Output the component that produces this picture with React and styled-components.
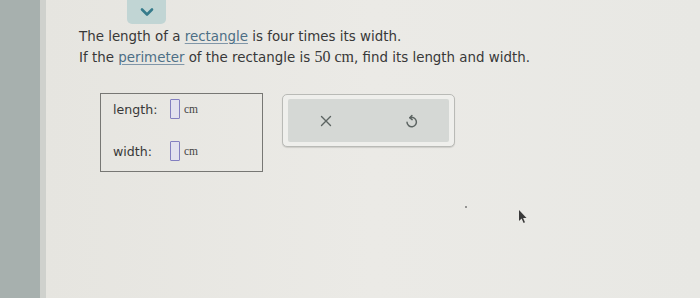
import React from "react";
import styled, { createGlobalStyle } from "styled-components";

const GlobalStyle = createGlobalStyle`
  html, body {
    margin: 0;
    padding: 0;
    background: #e9e8e4;
  }
  #root {
    height: 298px;
  }
`;

const Page = styled.div`
  display: flex;
  height: 298px;
  overflow: hidden;
  font-family: "DejaVu Sans", Verdana, sans-serif;
  color: #383838;
  position: relative;
`;

const SideBar = styled.div`
  width: 40px;
  flex-shrink: 0;
  background: #a7b0ae;
  border-right: 6px solid #cfd1cd;
`;

const Main = styled.div`
  flex: 1;
  display: flex;
  flex-direction: column;
  padding-left: 33px;
  background: linear-gradient(90deg, #e6e5e0 0%, #ebeae6 50%, #e8e8e4 100%);
`;

const Tab = styled.div`
  width: 39px;
  height: 24px;
  margin-left: 48px;
  background: #c1d5d4;
  border-radius: 0 0 5px 5px;
  display: flex;
  align-items: center;
  justify-content: center;
`;

const Question = styled.div`
  margin-top: 3px;
  font-size: 13.4px;
  line-height: 20px;
`;

const Term = styled.span`
  color: #4d6f86;
  text-decoration: underline;
  text-decoration-color: #8096a8;
  text-underline-offset: 2px;
`;

const MathText = styled.span`
  font-family: "Liberation Serif", "Times New Roman", serif;
  font-size: 16px;
`;

const Work = styled.div`
  display: flex;
  align-items: flex-start;
  margin-top: 25px;
  margin-left: 21px;
  gap: 19px;
`;

const AnswerBox = styled.div`
  width: 163px;
  height: 79px;
  border: 1px solid #777774;
  box-sizing: border-box;
  padding: 5px 0 0 12px;
  display: flex;
  flex-direction: column;
  gap: 22px;
`;

const Row = styled.div`
  display: flex;
  align-items: center;
  font-size: 12.6px;
`;

const Label = styled.span`
  width: ${(p) => p.$w}px;
`;

const Slot = styled.span`
  width: 8px;
  height: 18px;
  border: 1.5px solid #837fc0;
  background: #e2e1ee;
  border-radius: 1px;
`;

const Unit = styled.span`
  margin-left: 4px;
  font-family: "Liberation Serif", "Times New Roman", serif;
  font-size: 11.5px;
  color: #444;
`;

const Controls = styled.div`
  margin-top: 1px;
  width: 173px;
  height: 53px;
  box-sizing: border-box;
  border: 1px solid #b9bab6;
  border-radius: 5px;
  background: #efefec;
  padding: 4px 5px;
  box-shadow: 0 1px 1px rgba(0, 0, 0, 0.12);
`;

const Inner = styled.div`
  height: 100%;
  background: #d5d8d5;
  border-radius: 2px;
  display: flex;
  align-items: center;
  justify-content: space-between;
  padding: 0 28px;
`;

const IconButton = styled.button`
  border: none;
  background: none;
  padding: 0;
  width: 20px;
  height: 20px;
  display: flex;
  align-items: center;
  justify-content: center;
`;

const Cursor = styled.svg`
  position: absolute;
  left: 518px;
  top: 209px;
`;

const Speck = styled.div`
  position: absolute;
  left: 465px;
  top: 206px;
  width: 2px;
  height: 2px;
  border-radius: 50%;
  background: #777;
`;

export default function App() {
  return (
    <>
      <GlobalStyle />
      <Page>
        <SideBar />
        <Main>
          <Tab>
            <svg width="16" height="10" viewBox="0 0 16 10">
              <path d="M3 2.5 L8 7.5 L13 2.5" fill="none" stroke="#367b8b" strokeWidth="2.6" strokeLinecap="round" strokeLinejoin="round" />
            </svg>
          </Tab>
          <Question>
            <div>
              The length of a <Term>rectangle</Term> is four times its width.
            </div>
            <div>
              If the <Term>perimeter</Term> of the rectangle is <MathText>50 cm</MathText>, find its length and width.
            </div>
          </Question>
          <Work>
            <AnswerBox>
              <Row>
                <Label $w={57}>length:</Label>
                <Slot />
                <Unit>cm</Unit>
              </Row>
              <Row>
                <Label $w={57}>width:</Label>
                <Slot />
                <Unit>cm</Unit>
              </Row>
            </AnswerBox>
            <Controls>
              <Inner>
                <IconButton aria-label="clear">
                  <svg width="14" height="14" viewBox="0 0 14 14">
                    <path d="M2.5 2.5 L11.5 11.5 M11.5 2.5 L2.5 11.5" stroke="#5c6462" strokeWidth="1.4" strokeLinecap="round" />
                  </svg>
                </IconButton>
                <IconButton aria-label="undo">
                  <svg width="15" height="16" viewBox="0 0 14 15">
                    <path d="M5.6 4.4 A4.4 4.4 0 1 1 2.8 8.6" fill="none" stroke="#5c6462" strokeWidth="1.4" strokeLinecap="round" />
                    <path d="M7.4 2.3 L5.4 4.4 L7.6 6.2" fill="none" stroke="#5c6462" strokeWidth="1.4" strokeLinecap="round" strokeLinejoin="round" />
                  </svg>
                </IconButton>
              </Inner>
            </Controls>
          </Work>
        </Main>
        <Speck />
        <Cursor width="10" height="16" viewBox="0 0 10 16">
          <path d="M1 1 L1 12 L3.6 9.6 L5.6 14 L7 13.3 L5.1 9 L8.5 9 Z" fill="#3a3a3a" />
        </Cursor>
      </Page>
    </>
  );
}
